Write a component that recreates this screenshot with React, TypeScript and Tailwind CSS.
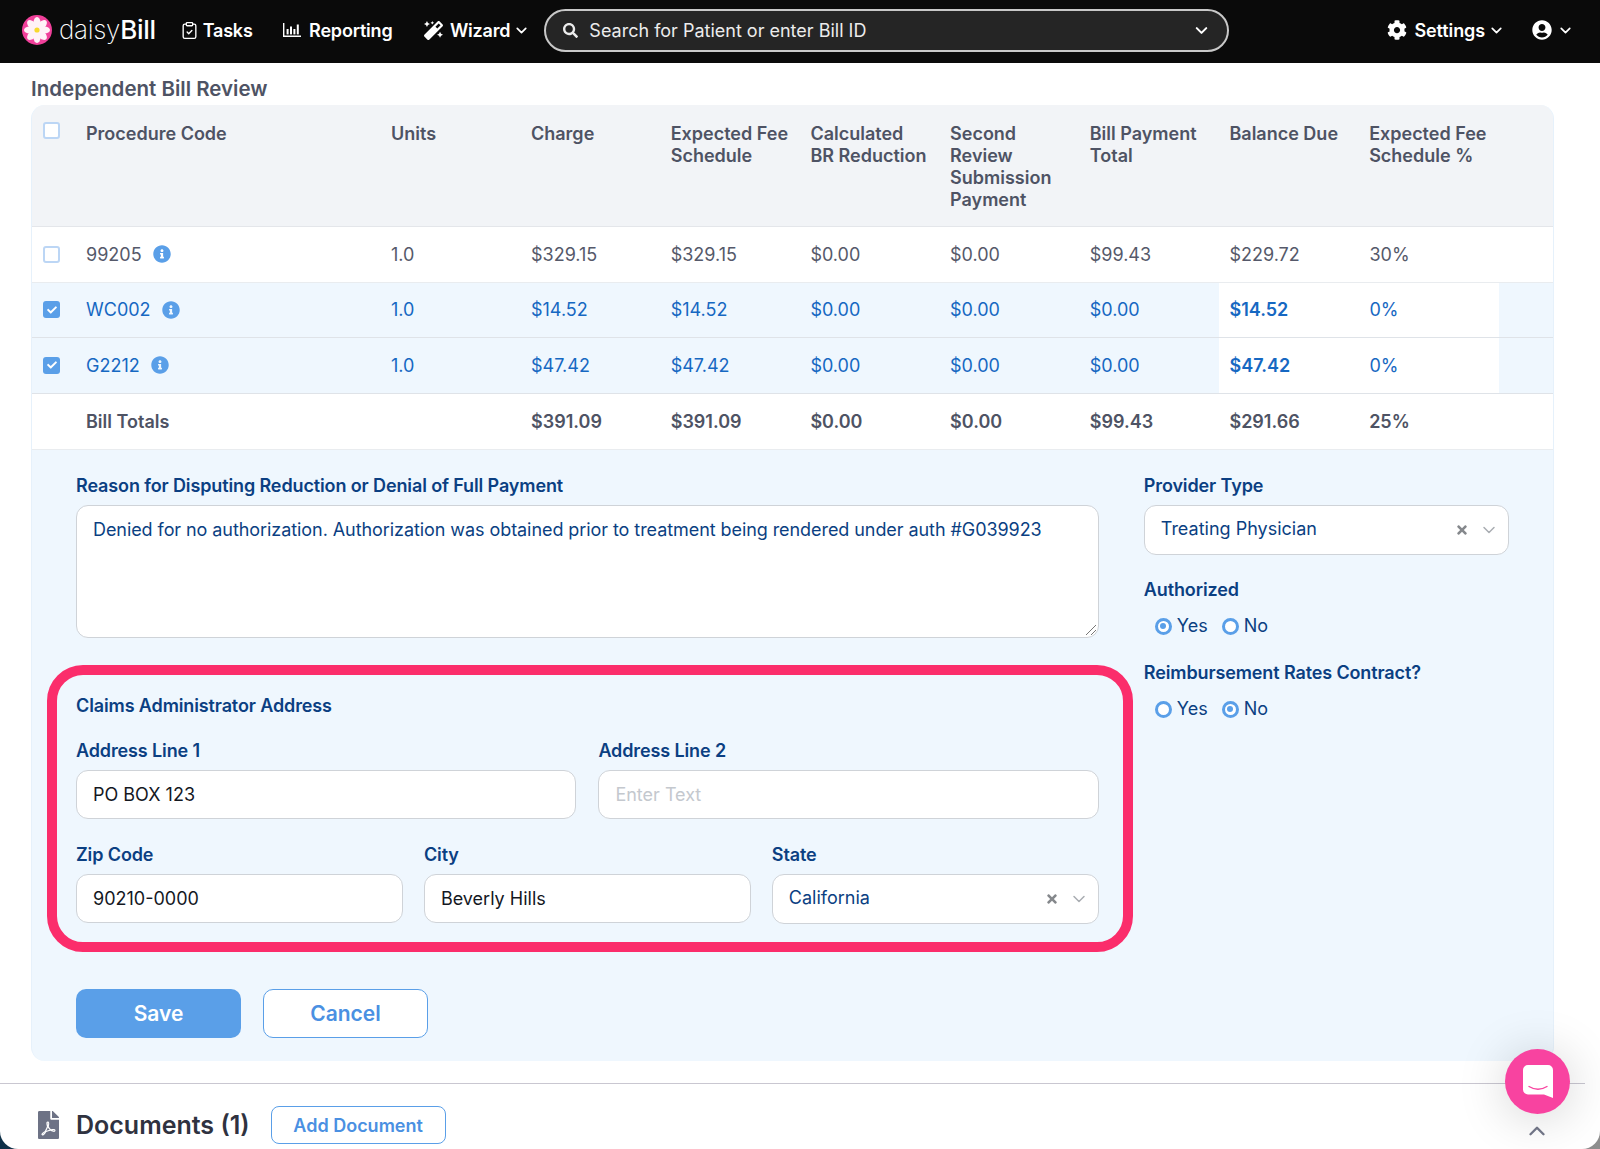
import { ChevronDown, ChevronUp, ClipboardCheck } from "lucide-react";
import { FaCheck, FaCog, FaFilePdf, FaInfoCircle, FaMagic, FaSearch, FaTimes, FaUserCircle } from "react-icons/fa";

type Row = {
  code: string;
  units: string;
  charge: string;
  fee: string;
  br: string;
  second: string;
  payment: string;
  balance: string;
  pct: string;
};

const rows: (Row & { checked: boolean })[] = [
  { code: "99205", units: "1.0", charge: "$329.15", fee: "$329.15", br: "$0.00", second: "$0.00", payment: "$99.43", balance: "$229.72", pct: "30%", checked: false },
  { code: "WC002", units: "1.0", charge: "$14.52", fee: "$14.52", br: "$0.00", second: "$0.00", payment: "$0.00", balance: "$14.52", pct: "0%", checked: true },
  { code: "G2212", units: "1.0", charge: "$47.42", fee: "$47.42", br: "$0.00", second: "$0.00", payment: "$0.00", balance: "$47.42", pct: "0%", checked: true },
];

const gridCols = "grid grid-cols-[54px_305px_140px_139.7px_139.7px_139.7px_139.7px_139.7px_139.7px_1fr]";

function Checkbox({ checked = false }: { checked?: boolean }) {
  if (checked) {
    return (
      <span className="ml-[11px] flex h-[17px] w-[17px] items-center justify-center rounded-[3px] bg-[#5a9fe8] text-white">
        <FaCheck className="h-[10px] w-[10px]" />
      </span>
    );
  }
  return <span className="ml-[11px] block h-[17px] w-[17px] rounded-[3px] border-2 border-[#bcd6f5] bg-white" />;
}

function Radio({ label, checked = false }: { label: string; checked?: boolean }) {
  return (
    <span className="flex items-center gap-[5px] text-[18px] leading-[22px] text-[#0b3f82]">
      <span className="flex h-[17px] w-[17px] items-center justify-center rounded-full border-[3px] border-[#5a9fe8] bg-white">
        {checked ? <span className="h-[6px] w-[6px] rounded-full bg-[#5a9fe8]" /> : null}
      </span>
      {label}
    </span>
  );
}

function Label({ children }: { children: string }) {
  return <div className="text-[18px] leading-[22px] font-semibold tracking-[-0.12px] text-[#0b3f82]">{children}</div>;
}

function TextField({ label, value, placeholder }: { label: string; value?: string; placeholder?: string }) {
  return (
    <div>
      <Label>{label}</Label>
      <div className={`mt-[8px] flex h-[49px] items-center rounded-[12px] border border-[#cfd3d8] bg-white px-[16px] text-[18px] ${value ? "text-[#14181f]" : "text-[#c4c8ce]"}`}>
        {value ?? placeholder}
      </div>
    </div>
  );
}

function SelectField({ label, value }: { label: string; value: string }) {
  return (
    <div>
      <Label>{label}</Label>
      <div className="mt-[8px] flex h-[50px] items-center rounded-[12px] border border-[#cfd3d8] bg-white pr-[9px] pl-[16px] text-[18px] text-[#0b3f82]">
        <span className="flex-1 pb-[3px]">{value}</span>
        <FaTimes className="mr-[10px] h-[14px] w-[14px] text-[#85888c]" />
        <ChevronDown className="h-[20px] w-[20px] text-[#a9adb2]" strokeWidth={1.8} />
      </div>
    </div>
  );
}

function ReportingIcon() {
  return (
    <svg viewBox="0 0 18 16" className="h-[16px] w-[18px]" fill="currentColor">
      <path d="M0 1h1.4v12.6H18V15H0z" />
      <rect x="3.6" y="7" width="2" height="5.4" />
      <rect x="7" y="4.5" width="2" height="7.9" />
      <rect x="10.4" y="7" width="2" height="5.4" />
      <rect x="13.8" y="2.5" width="2" height="9.9" />
    </svg>
  );
}

function DaisyLogo() {
  return (
    <svg viewBox="0 0 30 30" className="h-[30px] w-[30px]">
      <circle cx="15" cy="15" r="15" fill="#f0409a" />
      {[0, 45, 90, 135, 180, 225, 270, 315].map((deg) => (
        <ellipse key={deg} cx="15" cy="7.8" rx="3.6" ry="5.8" fill="#fff2f7" transform={`rotate(${deg} 15 15)`} />
      ))}
      <circle cx="15" cy="15" r="2.6" fill="#f8d92e" />
    </svg>
  );
}

function Header() {
  return (
    <header className="flex h-[63px] items-center bg-[#0a0a0a] pb-[3px] text-white">
      <div className="ml-[22px] flex items-center gap-[7px]">
        <DaisyLogo />
        <span className="text-[26px] leading-none font-extralight tracking-[-0.3px]">
          daisy<span className="font-medium">Bill</span>
        </span>
      </div>
      <nav className="ml-[24px] flex items-center text-[18px] font-semibold tracking-[-0.2px]">
        <span className="flex items-center gap-[4px]">
          <ClipboardCheck className="h-[19px] w-[19px]" strokeWidth={1.7} />
          Tasks
        </span>
        <span className="ml-[30px] flex items-center gap-[8.5px]">
          <ReportingIcon />
          Reporting
        </span>
        <span className="ml-[32px] flex items-center">
          <FaMagic className="mr-[6.5px] h-[19px] w-[19px]" />
          Wizard
          <ChevronDown className="ml-[3px] h-[17px] w-[17px]" strokeWidth={2.4} />
        </span>
      </nav>
      <div className="ml-[14px] flex h-[43px] w-[685px] items-center rounded-full border-2 border-[#c8c8c8] bg-[#252525] pr-[16px] pl-[17px] text-[18px] text-[#ececec]">
        <FaSearch className="h-[15px] w-[15px]" />
        <span className="ml-[11px] flex-1">Search for Patient or enter Bill ID</span>
        <ChevronDown className="h-[19px] w-[19px] text-white" strokeWidth={2.6} />
      </div>
      <div className="ml-auto flex items-center text-[18px] font-semibold tracking-[-0.1px]">
        <span className="flex items-center">
          <FaCog className="mr-[7px] h-[20px] w-[20px]" />
          Settings
          <ChevronDown className="ml-[3px] h-[17px] w-[17px]" strokeWidth={2.4} />
        </span>
        <span className="mr-[26px] ml-[27px] flex items-center gap-[5px]">
          <FaUserCircle className="h-[20px] w-[20px]" />
          <ChevronDown className="h-[17px] w-[17px]" strokeWidth={2.4} />
        </span>
      </div>
    </header>
  );
}

function BillTable() {
  return (
    <div className="text-[18px]">
      <div className={`${gridCols} h-[122px] border-b border-[#e4e6ea] bg-[#f2f4f7] pt-[18px] leading-[22px] font-semibold text-[#4e5364]`}>
        <div>
          <span className="-mt-[1px] block">
            <Checkbox />
          </span>
        </div>
        <div>Procedure Code</div>
        <div>Units</div>
        <div>Charge</div>
        <div className="pr-[10px]">Expected Fee Schedule</div>
        <div className="pr-[20px]">Calculated BR Reduction</div>
        <div className="pr-[10px]">Second Review Submission Payment</div>
        <div className="pr-[10px]">Bill Payment Total</div>
        <div>Balance Due</div>
        <div className="pr-[30px]">Expected Fee Schedule %</div>
      </div>
      {rows.map((row) => (
        <div
          key={row.code}
          className={`${gridCols} h-[55.5px] items-center border-b ${row.checked ? "border-[#dfe3e8] bg-[#eff7fe] text-[#1668c2]" : "border-[#e9ecef] bg-white text-[#55596a]"}`}
        >
          <Checkbox checked={row.checked} />
          <div className="flex items-center gap-[11px]">
            {row.code}
            <FaInfoCircle className="h-[18px] w-[18px] text-[#5a9fe8]" />
          </div>
          <div>{row.units}</div>
          <div>{row.charge}</div>
          <div>{row.fee}</div>
          <div>{row.br}</div>
          <div>{row.second}</div>
          <div>{row.payment}</div>
          <div className={`col-span-2 flex h-full items-center pl-[10px] ${row.checked ? "mr-[54px] -ml-[10px] bg-white" : "-ml-[10px]"}`}>
            <span className={`w-[140px] ${row.checked ? "font-semibold" : ""}`}>{row.balance}</span>
            <span>{row.pct}</span>
          </div>
        </div>
      ))}
      <div className={`${gridCols} h-[56.5px] items-center border-b border-[#e9ecef] bg-white font-semibold text-[#4e5364]`}>
        <div />
        <div>Bill Totals</div>
        <div />
        <div>$391.09</div>
        <div>$391.09</div>
        <div>$0.00</div>
        <div>$0.00</div>
        <div>$99.43</div>
        <div>$291.66</div>
        <div>25%</div>
      </div>
    </div>
  );
}

function ReviewForm() {
  return (
    <div className="flex pt-[25px] pr-[44px] pb-[23px] pl-[44px]">
      <div className="w-[1025px]">
        <Label>Reason for Disputing Reduction or Denial of Full Payment</Label>
        <div className="relative mt-[8px] h-[133px] rounded-[12px] border border-[#cfd3d8] bg-white px-[16px] pt-[12px] text-[18px] leading-[24px] tracking-[-0.07px] text-[#0b3f82]">
          Denied for no authorization. Authorization was obtained prior to treatment being rendered under auth #G039923
          <svg viewBox="0 0 12 12" className="absolute right-[1px] bottom-[1px] h-[12px] w-[12px]" stroke="#777" strokeWidth="1" fill="none">
            <path d="M1 11 11 1M6 11l5-5" />
          </svg>
        </div>

        <div className="mt-[27px] -mr-[34px] -ml-[29px] rounded-[36px] border-[10px] border-[#fb2d6b] pt-[20px] pr-[24px] pb-[18px] pl-[19px]">
          <Label>Claims Administrator Address</Label>
          <div className="mt-[23px] grid grid-cols-2 gap-x-[22px]">
            <TextField label="Address Line 1" value="PO BOX 123" />
            <TextField label="Address Line 2" placeholder="Enter Text" />
          </div>
          <div className="mt-[25px] grid grid-cols-3 gap-x-[21px]">
            <TextField label="Zip Code" value="90210-0000" />
            <TextField label="City" value="Beverly Hills" />
            <SelectField label="State" value="California" />
          </div>
        </div>

        <div className="mt-[37px] flex gap-[22px]">
          <button type="button" className="h-[49px] w-[165px] rounded-[10px] bg-[#5a9fe8] text-[21px] font-semibold text-white">
            Save
          </button>
          <button type="button" className="h-[49px] w-[165px] rounded-[10px] border border-[#5a9fe8] bg-white text-[21px] font-semibold text-[#4a90e2]">
            Cancel
          </button>
        </div>
      </div>

      <div className="ml-[45px] w-[366px]">
        <SelectField label="Provider Type" value="Treating Physician" />
        <div className="mt-[24px]">
          <Label>Authorized</Label>
        </div>
        <div className="mt-[14px] ml-[11px] flex gap-[14px]">
          <Radio label="Yes" checked />
          <Radio label="No" />
        </div>
        <div className="mt-[25px]">
          <Label>Reimbursement Rates Contract?</Label>
        </div>
        <div className="mt-[14px] ml-[11px] flex gap-[14px]">
          <Radio label="Yes" />
          <Radio label="No" checked />
        </div>
      </div>
    </div>
  );
}

export default function App() {
  return (
    <div className="relative h-[1149px] overflow-hidden bg-linear-to-r from-[#0e3048] to-[#8e8e8e] font-['Inter',sans-serif]">
      <div className="h-full rounded-b-[18px] bg-white">
        <Header />
        <main className="pr-[46px] pl-[31px]">
          <h2 className="pt-[14px] pb-[4px] text-[20.5px] leading-[24px] font-semibold text-[#4e5364]">Independent Bill Review</h2>
          <section className="overflow-hidden rounded-[14px] border-x border-[#e6f1fb] bg-[#eff7fe]">
            <BillTable />
            <ReviewForm />
          </section>
        </main>
        <div className="mt-[22px] mr-[15px] border-t border-[#c9c7d1]" />
        <div className="flex items-center pt-[22px] pl-[38px]">
          <FaFilePdf className="h-[28px] w-[21px] text-[#6d7285]" />
          <span className="ml-[17px] text-[25px] leading-[38px] font-semibold text-[#2f3240]">Documents (1)</span>
          <button type="button" className="ml-[21px] h-[38px] w-[175px] rounded-[8px] border border-[#5a9fe8] bg-white text-[18px] font-semibold text-[#4a90e2]">
            Add Document
          </button>
          <ChevronUp className="mr-[50px] ml-auto h-[26px] w-[26px] translate-y-[6px] text-[#74788a]" strokeWidth={2.2} />
        </div>
      </div>
      <div className="absolute top-[1049px] left-[1505px] flex h-[65px] w-[65px] items-center justify-center rounded-full bg-[#f843a0] shadow-[0_4px_50px_rgba(0,0,0,0.18)]">
        <svg viewBox="0 0 30 33" className="h-[33px] w-[30px]">
          <path d="M5 0h20a5 5 0 0 1 5 5v28l-9-3.6H5a5 5 0 0 1-5-5V5a5 5 0 0 1 5-5z" fill="#fff" />
          <path d="M6 21.5c5.5 3.4 12.5 3.4 18 0" fill="none" stroke="#f843a0" strokeWidth="1.4" strokeLinecap="round" />
        </svg>
      </div>
    </div>
  );
}
